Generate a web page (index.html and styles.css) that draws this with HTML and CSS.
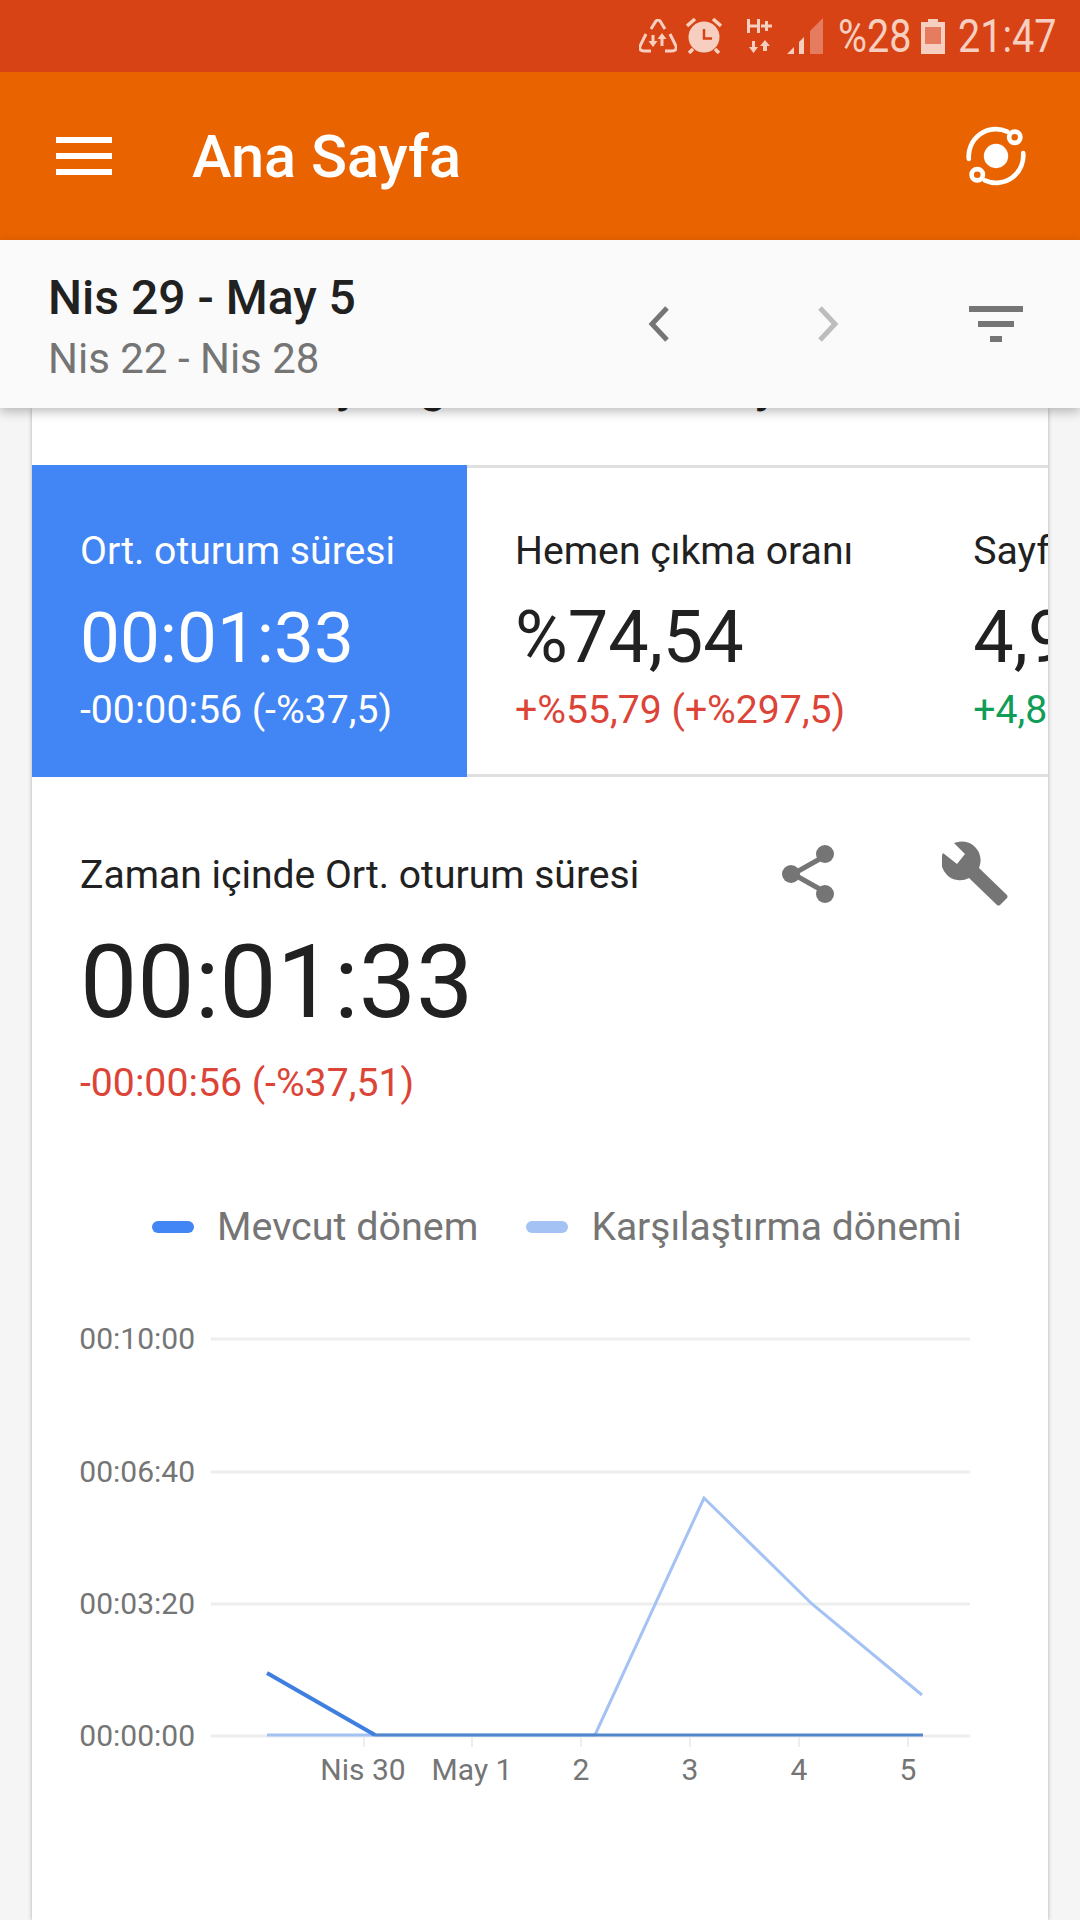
FILE: index.html
```html
<!DOCTYPE html>
<html lang="tr">
<head>
  <meta charset="UTF-8">
  <title>Ana Sayfa</title>
  <link rel="stylesheet" href="styles.css">
</head>
<body>

  <div class="status-bar">
    <svg class="st-recycle" width="38" height="34" viewBox="0 0 38 34">
      <path d="M12 10 L17 2 Q19 0 21 2 L26 10 M31 15 L37 27 Q38 32 33 32 L26 32 M12 32 L5 32 Q0 32 1 27 L7 15" fill="none" stroke="#f6cfc0" stroke-width="3"/>
      <path d="M12.500 16h3v6h3l-4.500 6-4.500-6h3z M23 14l4.500 6h-3v7h-3v-7h-3z" fill="#f6cfc0"/>
    </svg>
    <svg class="st-alarm" width="36" height="36" viewBox="0 0 36 36">
      <circle cx="18" cy="19" r="15.500" fill="#f6cfc0"/>
      <path d="M1 8 L9 1 M35 8 L27 1 M7 31 L3 35 M29 31 L33 35" stroke="#f6cfc0" stroke-width="3.500" fill="none"/>
      <path d="M18 11 V20.500 H26" stroke="#d84315" stroke-width="2.500" fill="none"/>
    </svg>
    <svg class="st-net" width="25" height="34" viewBox="0 0 25 34">
      <path d="M1.500 0 V14 M11.500 0 V14 M1.500 7 H11.500 M14 7 H25 M19.500 2 V12" stroke="#f6cfc0" stroke-width="3" fill="none"/>
      <path d="M6.500 34 L2 28 H5 V22 H8 V28 H11 Z M18 21 L23 27 H20 V32 H16 V27 H13 Z" fill="#f6cfc0"/>
    </svg>
    <svg class="st-signal" width="36" height="36" viewBox="0 0 36 36">
      <path d="M0 36 L7 29 V36 Z M12 24 L17 19 V36 H12 Z" fill="#f6cfc0"/>
      <path d="M23 13 L36 0 V36 H23 Z" fill="#e57b5f"/>
    </svg>
    <span class="st-text st-pct">%28</span>
    <svg class="st-battery" width="24" height="35" viewBox="0 0 24 35">
      <path d="M7 0 H17 V3 H24 V35 H0 V3 H7 Z" fill="#f6cfc0"/>
      <rect x="4" y="8" width="16" height="17" fill="#e57b5f"/>
    </svg>
    <span class="st-text st-time">21:47</span>
  </div>

  <header class="app-bar">
    <div class="menu-btn"><span></span><span></span><span></span></div>
    <div class="app-title">Ana Sayfa</div>
    <svg class="app-icon" width="60" height="60" viewBox="0 0 64 64">
      <circle cx="32" cy="32" r="13" fill="#fff"/>
      <path d="M3 35 A29 29 0 0 1 44 6" fill="none" stroke="#fff" stroke-width="5" stroke-linecap="round"/>
      <path d="M61 29 A29 29 0 0 1 20 58" fill="none" stroke="#fff" stroke-width="5" stroke-linecap="round"/>
      <circle cx="52" cy="12" r="6" fill="none" stroke="#fff" stroke-width="5"/>
      <circle cx="12" cy="52" r="6" fill="none" stroke="#fff" stroke-width="5"/>
    </svg>
  </header>

  <div class="date-bar">
    <div class="date-text">
      <div class="date-main">Nis 29 - May 5</div>
      <div class="date-sub">Nis 22 - Nis 28</div>
    </div>
    <svg class="nav-prev" width="26" height="38" viewBox="0 0 26 38"><path d="M21 3 L6 19 L21 35" fill="none" stroke="#757575" stroke-width="5"/></svg>
    <svg class="nav-next" width="26" height="38" viewBox="0 0 26 38"><path d="M5 3 L20 19 L5 35" fill="none" stroke="#bdbdbd" stroke-width="5"/></svg>
    <div class="filter-btn"><span class="f1"></span><span class="f2"></span><span class="f3"></span></div>
  </div>

  <main class="card">
    <div class="card-peek">
      <div class="peek-row"><span class="peek-y1">y</span><span class="peek-g">g</span><span class="peek-y2">y</span></div>
    </div>

    <div class="tabs">
      <div class="tab active">
        <div class="tab-label">Ort. oturum süresi</div>
        <div class="tab-value">00:01:33</div>
        <div class="tab-delta">-00:00:56 (-%37,5)</div>
      </div>
      <div class="tab">
        <div class="tab-label">Hemen çıkma oranı</div>
        <div class="tab-value">%74,54</div>
        <div class="tab-delta red">+%55,79 (+%297,5)</div>
      </div>
      <div class="tab">
        <div class="tab-label">Sayfa / oturum</div>
        <div class="tab-value">4,94</div>
        <div class="tab-delta green">+4,81 (+%3.700)</div>
      </div>
    </div>

    <section class="detail">
      <div class="detail-head">
        <div class="detail-title">Zaman içinde Ort. oturum süresi</div>
        <svg class="share-icon" width="56" height="60" viewBox="0 0 56 60">
          <path d="M44 12 L12 30 L44 48" fill="none" stroke="#757575" stroke-width="5"/>
          <circle cx="44" cy="10" r="9" fill="#757575"/>
          <circle cx="10" cy="30" r="9" fill="#757575"/>
          <circle cx="44" cy="50" r="9" fill="#757575"/>
        </svg>
        <svg class="wrench-icon" width="68" height="66" viewBox="0 0 68 66">
          <path d="M12 2 A19 19 0 0 1 37 27 L65 54 Q66 56 65 57 L58 64 Q57 65 55 64 L27 37 A19 19 0 0 1 1 12 L15 23 L23 13 Z" fill="#757575"/>
        </svg>
      </div>
      <div class="detail-value">00:01:33</div>
      <div class="detail-delta">-00:00:56 (-%37,51)</div>

      <div class="legend">
        <span class="swatch dark"></span><span class="legend-label">Mevcut dönem</span>
        <span class="swatch light"></span><span class="legend-label compare">Karşılaştırma dönemi</span>
      </div>
    </section>

    <svg class="chart" width="1016" height="520" viewBox="32 1300 1016 520">
      <g stroke="#eeeeee" stroke-width="3">
        <path d="M211 1338 H970"/>
        <path d="M211 1471 H970"/>
        <path d="M211 1603 H970"/>
        <path d="M211 1735 H970"/>
      </g>
      <g stroke="#eeeeee" stroke-width="2">
        <path d="M364 1735 V1746"/>
        <path d="M472 1735 V1746"/>
        <path d="M581 1735 V1746"/>
        <path d="M690 1735 V1746"/>
        <path d="M799 1735 V1746"/>
        <path d="M908 1735 V1746"/>
      </g>
      <g class="y-labels">
        <text x="195" y="1348">00:10:00</text>
        <text x="195" y="1481">00:06:40</text>
        <text x="195" y="1613">00:03:20</text>
        <text x="195" y="1745">00:00:00</text>
      </g>
      <g class="x-labels">
        <text x="363" y="1779">Nis 30</text>
        <text x="472" y="1779">May 1</text>
        <text x="581" y="1779">2</text>
        <text x="690" y="1779">3</text>
        <text x="799" y="1779">4</text>
        <text x="908" y="1779">5</text>
      </g>
      <polyline points="267,1734 595,1734 704,1497 812,1603 922,1694" fill="none" stroke="#a4c2f4" stroke-width="3"/>
      <polyline points="267,1672 375,1734" fill="none" stroke="#3f7fe0" stroke-width="4"/>
      <polyline points="375,1734 923,1734" fill="none" stroke="#4f86cc" stroke-width="3"/>
    </svg>
  </main>

</body>
</html>
```

FILE: styles.css
```css
* {
  box-sizing: border-box;
}

body {
  margin: 0;
  width: 1080px;
  height: 1920px;
  overflow: hidden;
  font-family: Roboto, sans-serif;
  background-color: #f5f5f5;
  color: #212121;
}

.status-bar {
  height: 72px;
  background-color: #d84315;
  display: flex;
  align-items: center;
  justify-content: flex-end;
  padding-right: 25px;
  color: #f6cfc0;
}

.status-bar svg {
  display: block;
}

.st-recycle { margin-right: 9px; }
.st-alarm { margin-right: 25px; }
.st-net { margin-right: 15px; }
.st-signal { margin-right: 15px; }
.st-battery { margin: 0 13px 0 14px; }

.st-text {
  font-size: 46px;
  line-height: 72px;
  white-space: nowrap;
  transform: scaleX(0.86);
  transform-origin: left center;
}

.st-pct { width: 69px; }
.st-time { width: 97px; }

.app-bar {
  height: 168px;
  background-color: #e96300;
  display: flex;
  align-items: center;
  padding: 0 54px 0 56px;
  color: #fff;
}

.menu-btn {
  width: 56px;
  margin-right: 80px;
  display: flex;
  flex-direction: column;
  gap: 10px;
}

.menu-btn span {
  height: 6px;
  background-color: #fff;
}

.app-title {
  flex: 1;
  font-size: 59.5px;
  font-weight: 500;
  padding-top: 1px;
}

.date-bar {
  position: relative;
  z-index: 2;
  height: 168px;
  background-color: #fafafa;
  box-shadow: 0 4px 10px rgba(0,0,0,0.25);
  display: flex;
  align-items: center;
  padding: 0 57px 0 48px;
}

.date-text {
  flex: 1;
  padding-top: 9px;
}

.date-main {
  font-size: 48px;
  font-weight: 500;
  line-height: 56px;
}

.date-sub {
  font-size: 42px;
  line-height: 56px;
  color: #757575;
  margin-top: 5px;
}

.nav-prev { margin-right: 143px; }
.nav-next { margin-right: 128px; }

.filter-btn {
  width: 54px;
  display: flex;
  flex-direction: column;
  align-items: center;
  gap: 9px;
}

.filter-btn span {
  height: 6px;
  background-color: #757575;
}

.f1 { width: 54px; }
.f2 { width: 36px; }
.f3 { width: 12px; }

.card {
  width: 1016px;
  height: 1512px;
  margin-left: 32px;
  background-color: #fff;
  box-shadow: 0 0 4px rgba(0,0,0,0.3);
  overflow: hidden;
}

.card-peek {
  display: flow-root;
  height: 57px;
}

.peek-row {
  display: flex;
  height: 56px;
  margin-top: -51px;
  padding-left: 304px;
  font-size: 48px;
  font-weight: 500;
  line-height: 56px;
}

.peek-g { margin-left: 60px; }
.peek-y2 { margin-left: 308px; }

.tabs {
  display: flex;
  height: 312px;
  overflow: hidden;
}

.tab {
  flex: none;
  height: 312px;
  padding: 60px 72px 0 48px;
  border-top: 3px solid #e0e0e0;
  border-bottom: 3px solid #e0e0e0;
}

.tab.active {
  width: 435px;
  padding: 63px 0 0 48px;
  border: none;
  background-color: #4285f4;
  color: #fff;
}

.tab-label {
  font-size: 39.2px;
  line-height: 46px;
}

.tab-value {
  font-size: 72px;
  line-height: 84px;
  margin-top: 22px;
}

.active .tab-value {
  font-size: 71px;
}

.tab-delta {
  font-size: 39.2px;
  line-height: 46px;
  margin-top: 7px;
}

.red { color: #db4437; }
.green { color: #0f9d58; }

.detail {
  padding: 0 0 0 48px;
}

.detail-head {
  display: flex;
  align-items: flex-start;
  padding-top: 75px;
}

.detail-title {
  flex: 1;
  font-size: 39.1px;
  line-height: 46px;
}

.share-icon { margin-right: 105px; margin-top: -8px; }
.wrench-icon { margin-right: 38px; margin-top: -11px; }

.detail-value {
  font-size: 102px;
  line-height: 116px;
  margin-top: 17px;
}

.detail-delta {
  font-size: 39.2px;
  line-height: 46px;
  color: #db4437;
  margin-top: 20px;
}

.legend {
  display: flex;
  align-items: center;
  margin-top: 97px;
  padding-left: 72px;
  font-size: 39.5px;
  color: #757575;
}

.swatch {
  width: 42px;
  height: 12px;
  border-radius: 6px;
  margin-right: 23px;
}

.swatch.dark { background-color: #4285f4; }
.swatch.light { background-color: #a4c2f4; }

.legend-label { margin-right: 48px; }
.legend-label.compare { font-size: 39px; margin-right: 0; }

.chart {
  display: block;
  margin-top: 51px;
}

.y-labels text {
  font-size: 30px;
  fill: #757575;
  text-anchor: end;
}

.x-labels text {
  font-size: 30px;
  fill: #757575;
  text-anchor: middle;
}
```
